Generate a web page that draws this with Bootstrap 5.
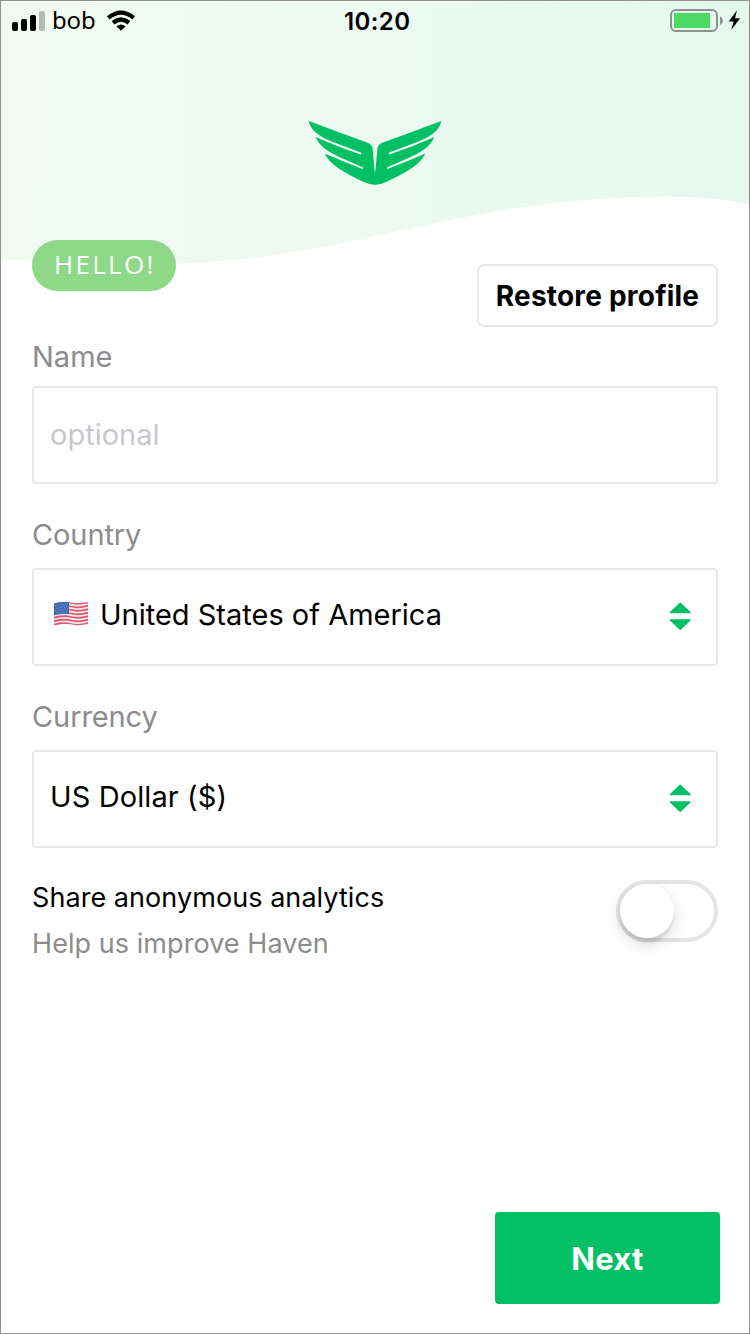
<!DOCTYPE html>
<html lang="en">
<head>
<meta charset="utf-8">
<meta name="viewport" content="width=device-width, initial-scale=1">
<title>Haven</title>
<link href="https://cdn.jsdelivr.net/npm/bootstrap@5.3.0/dist/css/bootstrap.min.css" rel="stylesheet">
<style>
  body { font-family: Inter, "Liberation Sans", sans-serif; color: #000; background: #fff; }
  .screen { width: 750px; height: 1334px; border: 1px solid #919191; padding: 0 31px; overflow: hidden; }
  .wave { left: 0; top: 0; z-index: 0; }
  .layer { z-index: 1; }
  .status-row { height: 39px; margin: 0 -31px; padding: 0 8px 0 11px; }
  .carrier { font-size: 24px; line-height: 36px; font-family: "Noto Sans", sans-serif; margin: 0 0 2px 6px; letter-spacing: -.2px; }
  .clock { font-size: 24px; font-weight: 600; line-height: 38px; letter-spacing: .4px; left: 343px; top: 2px; }
  .logo-row { height: 200px; padding-top: 79px; }
  .intro-row { height: 89px; }
  .hello { width: 144px; height: 51px; background: #8ed987; color: #fff; font: 400 26px/49px "Open Sans", sans-serif; letter-spacing: 2.3px; padding-left: 22px; }
  .restore { width: 241px; height: 63px; margin-top: 24px; border: 2px solid #e8e8e8; border-radius: 7px; font-size: 28px; font-weight: 700; letter-spacing: .2px; color: #000; background: #fff; padding: 1px 0 0; line-height: 58px; white-space: nowrap; }
  .field-label { font-size: 29px; line-height: 36px; color: #8c8c90; margin: 0; letter-spacing: -.1px; }
  .name-label { letter-spacing: 0; }
  .box { height: 98px; border: 2px solid #e8e8e8; border-radius: 4px; font-size: 29px; padding: 0 16px; background: #fff; color: #000; }
  input.box { padding-bottom: 2px; }
  .box::placeholder { color: #c7c7cd; opacity: 1; }
  .analytics { height: 80px; margin-top: 31px; }
  .a-title { font-size: 27px; line-height: 36px; margin-top: 1px; white-space: nowrap; letter-spacing: .06px; }
  .a-sub { color: #8c8c8c; font-size: 27px; line-height: 36px; margin-top: 10px; white-space: nowrap; letter-spacing: .06px; }
  .toggle { width: 102px; height: 62px; border: 4px solid #e5e5e5; border-radius: 31px; margin-top: 1px; }
  .knob { width: 54px; height: 54px; border-radius: 50%; background: #fff; box-shadow: 0 6px 16px rgba(0,0,0,.15), 0 5px 2px rgba(0,0,0,.08); }
  .next { width: 225px; height: 92px; margin: 0 -2px 29px 0; background: #04c065; color: #fff; border: 0; border-radius: 4px; font-size: 31px; font-weight: 700; letter-spacing: .3px; padding: 2px 0 0; }
</style>
</head>
<body>
<main class="screen position-relative d-flex flex-column">
  <svg class="wave position-absolute" width="748" height="270" viewBox="1 1 748 270" aria-hidden="true">
    <defs><linearGradient id="mint" gradientUnits="userSpaceOnUse" x1="0" y1="130" x2="750" y2="150"><stop offset="0" stop-color="#f1fbf2"/><stop offset=".45" stop-color="#edfaf1"/><stop offset=".8" stop-color="#e8f9ef"/><stop offset="1" stop-color="#e6f7f0"/></linearGradient></defs>
    <path fill="url(#mint)" d="M0 0H750V204.500C710 196.500 670 195.500 625 197.500C540 201 465 216 375 236C290 255 225 264 150 264C90 264 45 263 0 259Z"/>
  </svg>

  <header class="status-row layer d-flex align-items-center flex-shrink-0">
    <svg width="34" height="22" viewBox="0 0 34 22" aria-hidden="true"><rect x="0" y="12" width="6" height="9" rx="2"/><rect x="9" y="9" width="6" height="12" rx="2"/><rect x="18" y="5" width="6" height="16" rx="2"/><rect x="27" y="1" width="6" height="20" rx="2" opacity=".25"/></svg>
    <span class="carrier">bob</span>
    <svg width="36" height="24" viewBox="104 8.500 36 24" style="margin-left:9px" fill="none" stroke="#000" stroke-width="4.300" aria-hidden="true"><path d="M108.300 17.300Q121 7 133.700 17.300M113 22.200Q121 15.900 129 22.200"/><path d="M116.400 25.700Q121 22.300 125.600 25.700L121 30.300Z" fill="#000" stroke="none"/></svg>
    <span class="clock position-absolute">10:20</span>
    <svg class="ms-auto" width="72" height="24" viewBox="669 9 72 24" aria-hidden="true"><rect x="671" y="10" width="46" height="21" rx="5" fill="none" stroke="#8a928d" stroke-width="2"/><rect x="674" y="13" width="36" height="15" fill="#4cd964"/><path d="M720 16Q723 18 723 20.500T720 25Z" fill="#8a928d"/><path d="M737 10.300L728.700 21.500H733.600L731.200 30L740.200 18.300H735Z"/></svg>
  </header>

  <div class="logo-row layer text-center flex-shrink-0">
    <svg class="d-block mx-auto" width="134" height="67" viewBox="308 119 134 67" aria-hidden="true">
      <g id="wing" fill="#04c065"><path d="M308.800 121Q338 132 367 142.500Q372 144.500 372.500 148L374.800 172.500H375.200V184.800Q370 185 364 182C345 173 331 166 324.500 153.500Q342 161 362.500 169L363.200 167.500L345 159.500C329 152.500 320 147 315.500 137Q338 147 360.600 154.500L361.400 152.800L333 142C319 136.500 310 130 308.800 121Z"/></g>
      <use href="#wing" transform="translate(750 0) scale(-1 1)"/>
    </svg>
  </div>

  <div class="intro-row layer d-flex justify-content-between flex-shrink-0">
    <span class="hello rounded-pill">HELLO!</span>
    <button class="restore" type="button">Restore profile</button>
  </div>

  <form class="layer d-flex flex-column flex-grow-1">
    <label class="field-label name-label" for="name" style="margin-top:10px">Name</label>
    <input id="name" class="box form-control" placeholder="optional" style="margin-top:11px">

    <span class="field-label" style="margin-top:33px">Country</span>
    <div class="box d-flex align-items-center justify-content-between" style="margin-top:15px">
      <div class="d-flex align-items-center pb-1" style="margin-left:3px">
        <svg width="36" height="26" viewBox="53 602 36 26" aria-hidden="true">
          <defs><clipPath id="flag"><path d="M54 603.500Q63 601 71 602.500T88 602V624Q80 626 72 624.500T54 625.500Z"/></clipPath></defs>
          <g clip-path="url(#flag)"><path fill="#f4e9ec" d="M53 600h36v28H53z"/>
          <path fill="none" stroke="#df5870" stroke-width="1.800" d="M53 604Q63 601 71 603T89 602M53 607.500Q63 604.500 71 606.500T89 605.500M53 611Q63 608 71 610T89 609M53 614.500Q63 611.500 71 613.500T89 612.500M53 618Q63 615 71 617T89 616M53 621.500Q63 618.500 71 620.500T89 619.500M53 625Q63 622 71 624T89 623"/>
          <path fill="#3c6cb0" d="M53 601H69V614Q62 613 53 615.500Z"/>
          <path fill="none" stroke="#91aed5" stroke-width=".8" stroke-dasharray="1 1.500" d="M55 605.500L68 604M56 608L68 606.500M55 610.500L68 609M56 613L68 611.500"/></g>
        </svg>
        <span style="margin-left:11px">United States of America</span>
      </div>
      <svg width="22" height="30" viewBox="0 0 22 30" style="margin:0 9px 2px 0" fill="#04c065" stroke="#04c065" stroke-width="1.500" stroke-linejoin="round" aria-hidden="true"><path d="M1.500 11.500L11.200 2.200L21 11.500ZM1.500 19L11.200 28.300L21 19Z"/></svg>
    </div>

    <span class="field-label" style="margin-top:33px">Currency</span>
    <div class="box d-flex align-items-center justify-content-between" style="margin-top:15px">
      <span class="pb-1" style="letter-spacing:.1px">US Dollar ($)</span>
      <svg width="22" height="30" viewBox="0 0 22 30" style="margin:0 9px 2px 0" fill="#04c065" stroke="#04c065" stroke-width="1.500" stroke-linejoin="round" aria-hidden="true"><path d="M1.500 11.500L11.200 2.200L21 11.500ZM1.500 19L11.200 28.300L21 19Z"/></svg>
    </div>

    <div class="analytics d-flex justify-content-between">
      <div><div class="a-title">Share anonymous analytics</div><div class="a-sub">Help us improve Haven</div></div>
      <div class="toggle" role="switch" aria-checked="false"><div class="knob"></div></div>
    </div>
    <button class="next btn align-self-end mt-auto" type="button">Next</button>
  </form>
</main>
<script src="https://cdn.jsdelivr.net/npm/bootstrap@5.3.0/dist/js/bootstrap.bundle.min.js"></script>
</body>
</html>
